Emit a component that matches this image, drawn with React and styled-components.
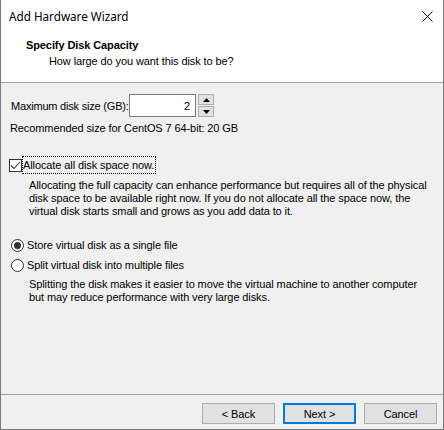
import React from 'react';
import styled, { createGlobalStyle } from 'styled-components';

const Global = createGlobalStyle`
	html, body {
		margin: 0;
		padding: 0;
		background: #fff;
	}
	* {
		box-sizing: border-box;
	}
`;

const Window = styled.div`
	width: 444px;
	height: 430px;
	display: flex;
	flex-direction: column;
	border: 1px solid #7a7a7a;
	border-top: none;
	background: #f0f0f0;
	font-family: 'Liberation Sans', Arial, sans-serif;
	font-size: 11px;
	letter-spacing: -0.1px;
	color: #000;
`;

const TitleBar = styled.div`
	height: 31px;
	background: #fff;
	display: flex;
	align-items: center;
	justify-content: space-between;
	padding: 1px 10px 0 8px;
	font-family: 'Noto Sans', 'Open Sans', sans-serif;
	font-size: 11.7px;
	letter-spacing: 0;
`;

const Header = styled.div`
	height: 52px;
	background: #fff;
	border-bottom: 1px solid #a0a0a0;
	padding: 7px 0 0 25px;
	h2 {
		margin: 0;
		font-size: 11px;
		font-weight: bold;
		line-height: 14px;
	}
	p {
		margin: 2px 0 0 23px;
		line-height: 14px;
	}
`;

const Body = styled.div`
	flex: 1;
	padding: 11px 0 0 9px;
`;

const Row = styled.div`
	display: flex;
	align-items: center;
	height: ${(p) => p.h || 16}px;
	margin-top: ${(p) => p.mt || 0}px;
	white-space: nowrap;
`;

const Label = styled.span`
	flex: 0 0 119px;
	padding-left: 1px;
	letter-spacing: -0.2px;
`;

const Input = styled.div`
	width: 67px;
	height: 23px;
	background: #fff;
	border: 1px solid #7a7a7a;
	text-align: right;
	padding: 4px 5px 0 0;
	line-height: 14px;
`;

const Spinner = styled.div`
	display: flex;
	flex-direction: column;
	gap: 1px;
	margin-left: 2px;
	height: 23px;
`;

const SpinBtn = styled.div`
	width: 16px;
	height: 11px;
	background: #e1e1e1;
	border: 1px solid #adadad;
	display: flex;
	align-items: center;
	justify-content: center;
`;

const Text = styled.div`
	line-height: 13px;
	margin-top: ${(p) => p.mt || 0}px;
	margin-left: ${(p) => p.ml || 0}px;
	white-space: nowrap;
`;

const Box = styled.span`
	width: 13px;
	height: 13px;
	border: 1px solid #333;
	background: #fff;
	display: inline-flex;
	align-items: center;
	justify-content: center;
	margin: 0 1px 0 -1px;
`;

const Radio = styled.span`
	width: 13px;
	height: 13px;
	border: 1px solid #333;
	border-radius: 50%;
	background: #fff;
	display: inline-flex;
	align-items: center;
	justify-content: center;
	margin: 0 3px 0 1px;
	&::after {
		content: '';
		width: 7px;
		height: 7px;
		border-radius: 50%;
		background: ${(p) => (p.checked ? '#333' : 'transparent')};
	}
`;

const Focus = styled.span`
	outline: 1px dotted #000;
	padding: 1px 1px 1px 0;
	line-height: 14px;
`;

const Footer = styled.div`
	height: 35px;
	border-top: 1px solid #a0a0a0;
	display: flex;
	justify-content: flex-end;
	align-items: flex-start;
	gap: 8px;
	padding: 8px 6px 0 0;
`;

const Button = styled.div`
	width: 73px;
	height: 21px;
	background: #e1e1e1;
	border: ${(p) => (p.primary ? '2px solid #0078d7' : '1px solid #adadad')};
	display: flex;
	align-items: center;
	justify-content: center;
`;

const Arrow = ({ down }) => (
	<svg width="7" height="4" viewBox="0 0 7 4">
		<path d={down ? 'M0 0h7L3.5 4z' : 'M0 4h7L3.5 0z'} fill="#000" />
	</svg>
);

const App = () => {
	return (
		<>
			<Global />
			<Window>
				<TitleBar>
					<span>Add Hardware Wizard</span>
					<svg width="11" height="11" viewBox="0 0 11 11">
						<path d="M0.5 0.5l10 10M10.5 0.5l-10 10" stroke="#000" strokeWidth="1" />
					</svg>
				</TitleBar>
				<Header>
					<h2>Specify Disk Capacity</h2>
					<p>How large do you want this disk to be?</p>
				</Header>
				<Body>
					<Row h={23}>
						<Label>Maximum disk size (GB):</Label>
						<Input>2</Input>
						<Spinner>
							<SpinBtn>
								<Arrow />
							</SpinBtn>
							<SpinBtn>
								<Arrow down />
							</SpinBtn>
						</Spinner>
					</Row>
					<Text mt={5}>Recommended size for CentOS 7 64-bit: 20 GB</Text>
					<Row mt={22} h={16}>
						<Box>
							<svg width="11" height="9" viewBox="0 0 11 9">
								<path d="M1 4.5l3 3L10 1" stroke="#333" strokeWidth="1.1" fill="none" />
							</svg>
						</Box>
						<Focus>Allocate all disk space now.</Focus>
					</Row>
					<Text mt={6} ml={19}>
						Allocating the full capacity can enhance performance but requires all of the physical
						<br />
						disk space to be available right now. If you do not allocate all the space now, the
						<br />
						virtual disk starts small and grows as you add data to it.
					</Text>
					<Row mt={19}>
						<Radio checked />
						Store virtual disk as a single file
					</Row>
					<Row mt={4}>
						<Radio />
						Split virtual disk into multiple files
					</Row>
					<Text mt={5} ml={19}>
						Splitting the disk makes it easier to move the virtual machine to another computer
						<br />
						but may reduce performance with very large disks.
					</Text>
				</Body>
				<Footer>
					<Button>&lt; Back</Button>
					<Button primary>Next &gt;</Button>
					<Button>Cancel</Button>
				</Footer>
			</Window>
		</>
	);
};

export default App;
